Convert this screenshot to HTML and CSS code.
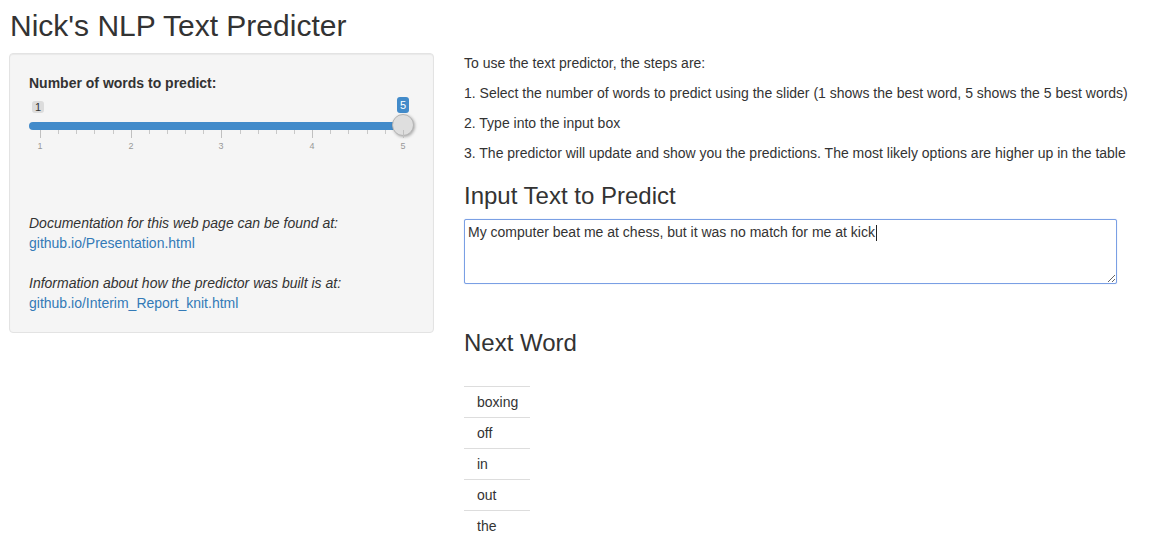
FILE: index.html
```html
<!DOCTYPE html>
<html lang="en">
<head>
<meta charset="utf-8">
<title>Nick's NLP Text Predicter</title>
<link rel="stylesheet" href="styles.css">
</head>
<body>
<div class="page">
  <h2 class="title">Nick's NLP Text Predicter</h2>
  <div class="row">
    <aside class="sidebar">
      <form class="well">
        <label class="control-label">Number of words to predict:</label>
        <div class="irs">
          <span class="irs-min">1</span>
          <span class="irs-single">5</span>
          <span class="irs-line"></span>
          <span class="irs-bar"></span>
          <span class="irs-handle"></span>
          <div class="irs-grid">
            <span class="tick major" style="left:11px"></span>
            <span class="tick" style="left:29px"></span>
            <span class="tick" style="left:47px"></span>
            <span class="tick" style="left:65px"></span>
            <span class="tick" style="left:84px"></span>
            <span class="tick major" style="left:102px"></span>
            <span class="tick" style="left:120px"></span>
            <span class="tick" style="left:138px"></span>
            <span class="tick" style="left:156px"></span>
            <span class="tick" style="left:174px"></span>
            <span class="tick major" style="left:192px"></span>
            <span class="tick" style="left:211px"></span>
            <span class="tick" style="left:229px"></span>
            <span class="tick" style="left:247px"></span>
            <span class="tick" style="left:265px"></span>
            <span class="tick major" style="left:283px"></span>
            <span class="tick" style="left:301px"></span>
            <span class="tick" style="left:319px"></span>
            <span class="tick" style="left:338px"></span>
            <span class="tick" style="left:356px"></span>
            <span class="tick major" style="left:374px"></span>
            <span class="grid-text" style="left:11px">1</span>
            <span class="grid-text" style="left:102px">2</span>
            <span class="grid-text" style="left:192px">3</span>
            <span class="grid-text" style="left:283px">4</span>
            <span class="grid-text" style="left:374px">5</span>
          </div>
        </div>
        <div class="notes">
          <em>Documentation for this web page can be found at:</em><br>
          <a href="#">github.io/Presentation.html</a><br><br>
          <em>Information about how the predictor was built is at:</em><br>
          <a href="#">github.io/Interim_Report_knit.html</a>
        </div>
      </form>
    </aside>
    <main class="main">
      <p>To use the text predictor, the steps are:</p>
      <p>1. Select the number of words to predict using the slider (1 shows the best word, 5 shows the 5 best words)</p>
      <p>2. Type into the input box</p>
      <p>3. The predictor will update and show you the predictions. The most likely options are higher up in the table</p>
      <h3 class="h-input">Input Text to Predict</h3>
      <div class="text-wrap">
        <textarea class="input-text">My computer beat me at chess, but it was no match for me at kick</textarea>
        <span class="caret"></span>
      </div>
      <h3 class="h-next">Next Word</h3>
      <table class="words">
        <tbody>
          <tr><td>boxing</td></tr>
          <tr><td>off</td></tr>
          <tr><td>in</td></tr>
          <tr><td>out</td></tr>
          <tr><td>the</td></tr>
        </tbody>
      </table>
    </main>
  </div>
</div>
</body>
</html>
```
FILE: styles.css
```css
* { box-sizing: border-box; }
html, body { margin: 0; padding: 0; background: #fff; }
body {
  font-family: "Liberation Sans", Arial, Helvetica, sans-serif;
  font-size: 14px;
  line-height: 20px;
  color: #333;
}
.page { padding: 0 0 0 9px; }
.title {
  font-size: 30px;
  font-weight: 500;
  line-height: 33px;
  margin: 9px 0 11px 1px;
}
.row { display: flex; align-items: flex-start; gap: 30px; }
.sidebar { width: 425px; flex: none; }
.well {
  background: #f5f5f5;
  border: 1px solid #e3e3e3;
  border-radius: 4px;
  box-shadow: inset 0 1px 1px rgba(0,0,0,0.05);
  padding: 19px;
  margin: 0;
}
.control-label {
  display: block;
  font-weight: bold;
  margin-bottom: 5px;
}
.irs { position: relative; height: 60px; margin-bottom: 55px; }
.irs-min {
  position: absolute; left: 3px; top: 3px;
  font-size: 11px; line-height: 12px;
  padding: 0 3px; border-radius: 3px;
  background: rgba(0,0,0,0.1); color: #333;
}
.irs-single {
  position: absolute; left: 368px; top: -1px;
  font-size: 11px; line-height: 16px;
  padding: 0 3px; border-radius: 3px;
  background: #428bca; color: #fff;
}
.irs-line {
  position: absolute; left: 0; right: 0; top: 24px; height: 8px;
  border-radius: 8px; background: #ededed;
}
.irs-bar {
  position: absolute; left: 0; width: 376px; top: 24px; height: 8px;
  border-radius: 8px 0 0 8px; background: #428bca;
}
.irs-handle {
  position: absolute; left: 363px; top: 16px; width: 22px; height: 22px;
  border-radius: 50%;
  background: #dedede;
  border: 1px solid #b5b5b5;
  box-shadow: 1px 1px 3px rgba(0,0,0,0.3);
}
.irs-grid { position: absolute; left: 0; right: 0; top: 32px; height: 24px; }
.tick {
  position: absolute; top: 0; width: 1px; height: 4px; background: #c8c8c8;
}
.tick.major { height: 8px; background: #c0c0c0; }
.grid-text {
  position: absolute; top: 10px; width: 20px; margin-left: -10px;
  text-align: center; font-size: 9px; line-height: 12px; color: #999;
}
.notes em { font-style: italic; }
.notes a { color: #337ab7; text-decoration: none; }
.main { flex: 1; min-width: 0; }
.main p { margin: 0 0 10px; }
h3 {
  font-size: 24px; font-weight: 500; line-height: 26px;
}
.h-input { margin: 20px 0 10px; }
.text-wrap { position: relative; width: 653px; margin: 0 0 15px; }
.input-text {
  display: block;
  width: 653px; height: 65px;
  margin: 0;
  padding: 2px 3px;
  font-family: "Liberation Sans", Arial, sans-serif;
  font-size: 14px; line-height: 20px; color: #333;
  border: 1px solid #7a9fe4;
  border-radius: 2px;
  box-shadow: 0 0 1px 0 rgba(102,150,233,0.6);
  outline: none;
  resize: both;
}
.caret {
  position: absolute; left: 412px; top: 6px;
  width: 1px; height: 16px; background: #222;
}
.h-next { margin: 46px 0 30px; }
.words { border-collapse: collapse; }
.words td {
  border-top: 1px solid #ddd;
  padding: 5px 12px 5px 13px;
  line-height: 20px;
}
```
